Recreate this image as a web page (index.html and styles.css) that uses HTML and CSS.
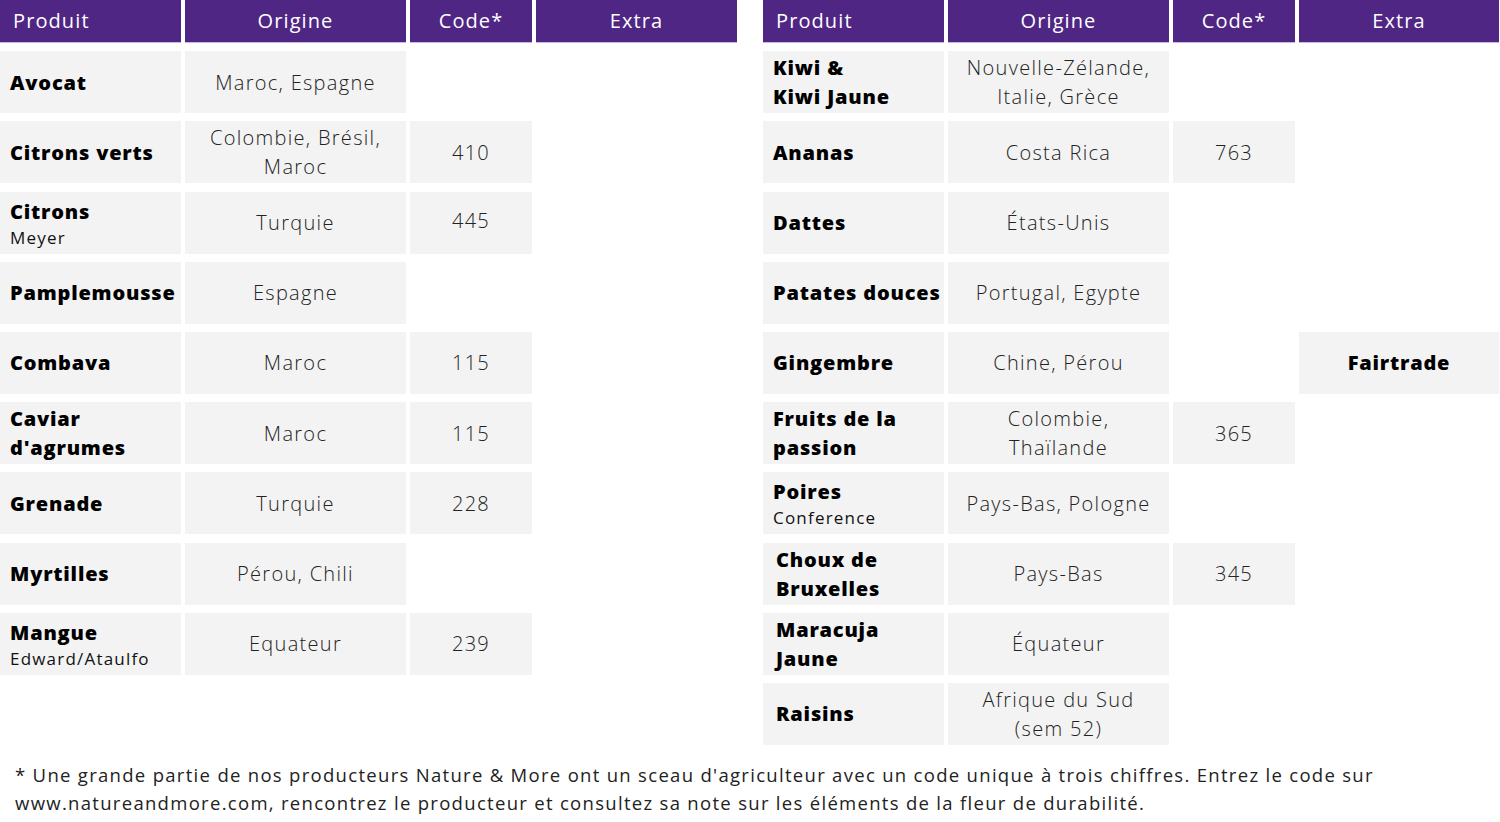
FILE: index.html
```html
<!DOCTYPE html>
<html lang="fr">
<head>
<meta charset="utf-8">
<link rel="stylesheet" href="styles.css">
</head>
<body>
<div class="page">
  <div class="tables">
    <div class="grid left">
      <div class="hd hd-prod">Produit</div><div class="hd">Origine</div><div class="hd">Code*</div><div class="hd">Extra</div>

      <div class="c prod"><b>Avocat</b></div><div class="c">Maroc, Espagne</div><div class="e"></div><div class="e"></div>
      <div class="c prod"><b>Citrons verts</b></div><div class="c">Colombie, Brésil,<br>Maroc</div><div class="c">410</div><div class="e"></div>
      <div class="c prod"><b>Citrons</b><span class="sub">Meyer</span></div><div class="c">Turquie</div><div class="c code-up">445</div><div class="e"></div>
      <div class="c prod"><b>Pamplemousse</b></div><div class="c">Espagne</div><div class="e"></div><div class="e"></div>
      <div class="c prod"><b>Combava</b></div><div class="c">Maroc</div><div class="c">115</div><div class="e"></div>
      <div class="c prod"><b>Caviar<br>d'agrumes</b></div><div class="c">Maroc</div><div class="c">115</div><div class="e"></div>
      <div class="c prod"><b>Grenade</b></div><div class="c">Turquie</div><div class="c">228</div><div class="e"></div>
      <div class="c prod"><b>Myrtilles</b></div><div class="c">Pérou, Chili</div><div class="e"></div><div class="e"></div>
      <div class="c prod"><b>Mangue</b><span class="sub">Edward/Ataulfo</span></div><div class="c">Equateur</div><div class="c">239</div><div class="e"></div>
    </div>

    <div class="grid right">
      <div class="hd hd-prod">Produit</div><div class="hd">Origine</div><div class="hd">Code*</div><div class="hd">Extra</div>

      <div class="c prod"><b>Kiwi &amp;<br>Kiwi Jaune</b></div><div class="c">Nouvelle-Zélande,<br>Italie, Grèce</div><div class="e"></div><div class="e"></div>
      <div class="c prod"><b>Ananas</b></div><div class="c">Costa Rica</div><div class="c">763</div><div class="e"></div>
      <div class="c prod"><b>Dattes</b></div><div class="c">États-Unis</div><div class="e"></div><div class="e"></div>
      <div class="c prod"><b>Patates douces</b></div><div class="c">Portugal, Egypte</div><div class="e"></div><div class="e"></div>
      <div class="c prod"><b>Gingembre</b></div><div class="c">Chine, Pérou</div><div class="e"></div><div class="c extra"><b>Fairtrade</b></div>
      <div class="c prod"><b>Fruits de la<br>passion</b></div><div class="c">Colombie,<br>Thaïlande</div><div class="c">365</div><div class="e"></div>
      <div class="c prod"><b>Poires</b><span class="sub">Conference</span></div><div class="c">Pays-Bas, Pologne</div><div class="e"></div><div class="e"></div>
      <div class="c prod ind"><b>Choux de<br>Bruxelles</b></div><div class="c">Pays-Bas</div><div class="c">345</div><div class="e"></div>
      <div class="c prod ind"><b>Maracuja<br>Jaune</b></div><div class="c">Équateur</div><div class="e"></div><div class="e"></div>
      <div class="c prod ind"><b>Raisins</b></div><div class="c">Afrique du Sud<br>(sem 52)</div><div class="e"></div><div class="e"></div>
    </div>
  </div>
  <p class="note">* Une grande partie de nos producteurs Nature &amp; More ont un sceau d'agriculteur avec un code unique à trois chiffres. Entrez le code sur www.natureandmore.com, rencontrez le producteur et consultez sa note sur les éléments de la fleur de durabilité.</p>
</div>
</body>
</html>
```

FILE: styles.css
```css
* { box-sizing: border-box; }
html, body { margin: 0; padding: 0; background: #ffffff; }
body {
  font-family: "Open Sans", "Noto Sans", "Liberation Sans", sans-serif;
  color: #222222;
  width: 1500px;
  height: 822px;
  overflow: hidden;
}
.tables {
  display: flex;
  gap: 26px;
  align-items: flex-start;
}
.grid {
  display: grid;
  grid-template-rows: 43px;
  grid-auto-rows: 62px;
  row-gap: 8.2px;
  column-gap: 4px;
}
.left { grid-template-columns: 181px 221px 122px 201px; width: 737px; }
.right { grid-template-columns: 181px 221px 122px 200px; width: 737px; }
.hd {
  background: #4f2683;
  color: #ffffff;
  font-size: 20px;
  font-weight: 500;
  letter-spacing: 1.1px;
  display: flex;
  align-items: center;
  justify-content: center;
  border-bottom: 1px solid #c9b8e0;
  padding-bottom: 1px;
}
.hd-prod { justify-content: flex-start; padding-left: 13px; }
.c {
  background: #f3f3f3;
  display: flex;
  flex-direction: column;
  align-items: center;
  justify-content: center;
  text-align: center;
  font-size: 20px;
  font-weight: 300;
  letter-spacing: 1.3px;
  line-height: 29px;
  color: #222222;
}
.e { background: transparent; }
.prod {
  align-items: flex-start;
  text-align: left;
  padding-left: 10px;
  color: #000000;
}
.prod.ind { padding-left: 13px; }
.prod b, .extra b {
  font-weight: 800;
  font-size: 20px;
  line-height: 29px;
  letter-spacing: 0.8px;
  color: #000000;
}
.sub {
  font-size: 17px;
  line-height: 23px;
  font-weight: 400;
  letter-spacing: 1.2px;
  color: #111111;
}
.code-up { justify-content: flex-start; padding-top: 14px; }
.note {
  margin: 16px 0 0 15px;
  width: 1380px;
  font-size: 18.5px;
  line-height: 28px;
  font-weight: 400;
  letter-spacing: 1.3px;
  color: #222222;
}
```
